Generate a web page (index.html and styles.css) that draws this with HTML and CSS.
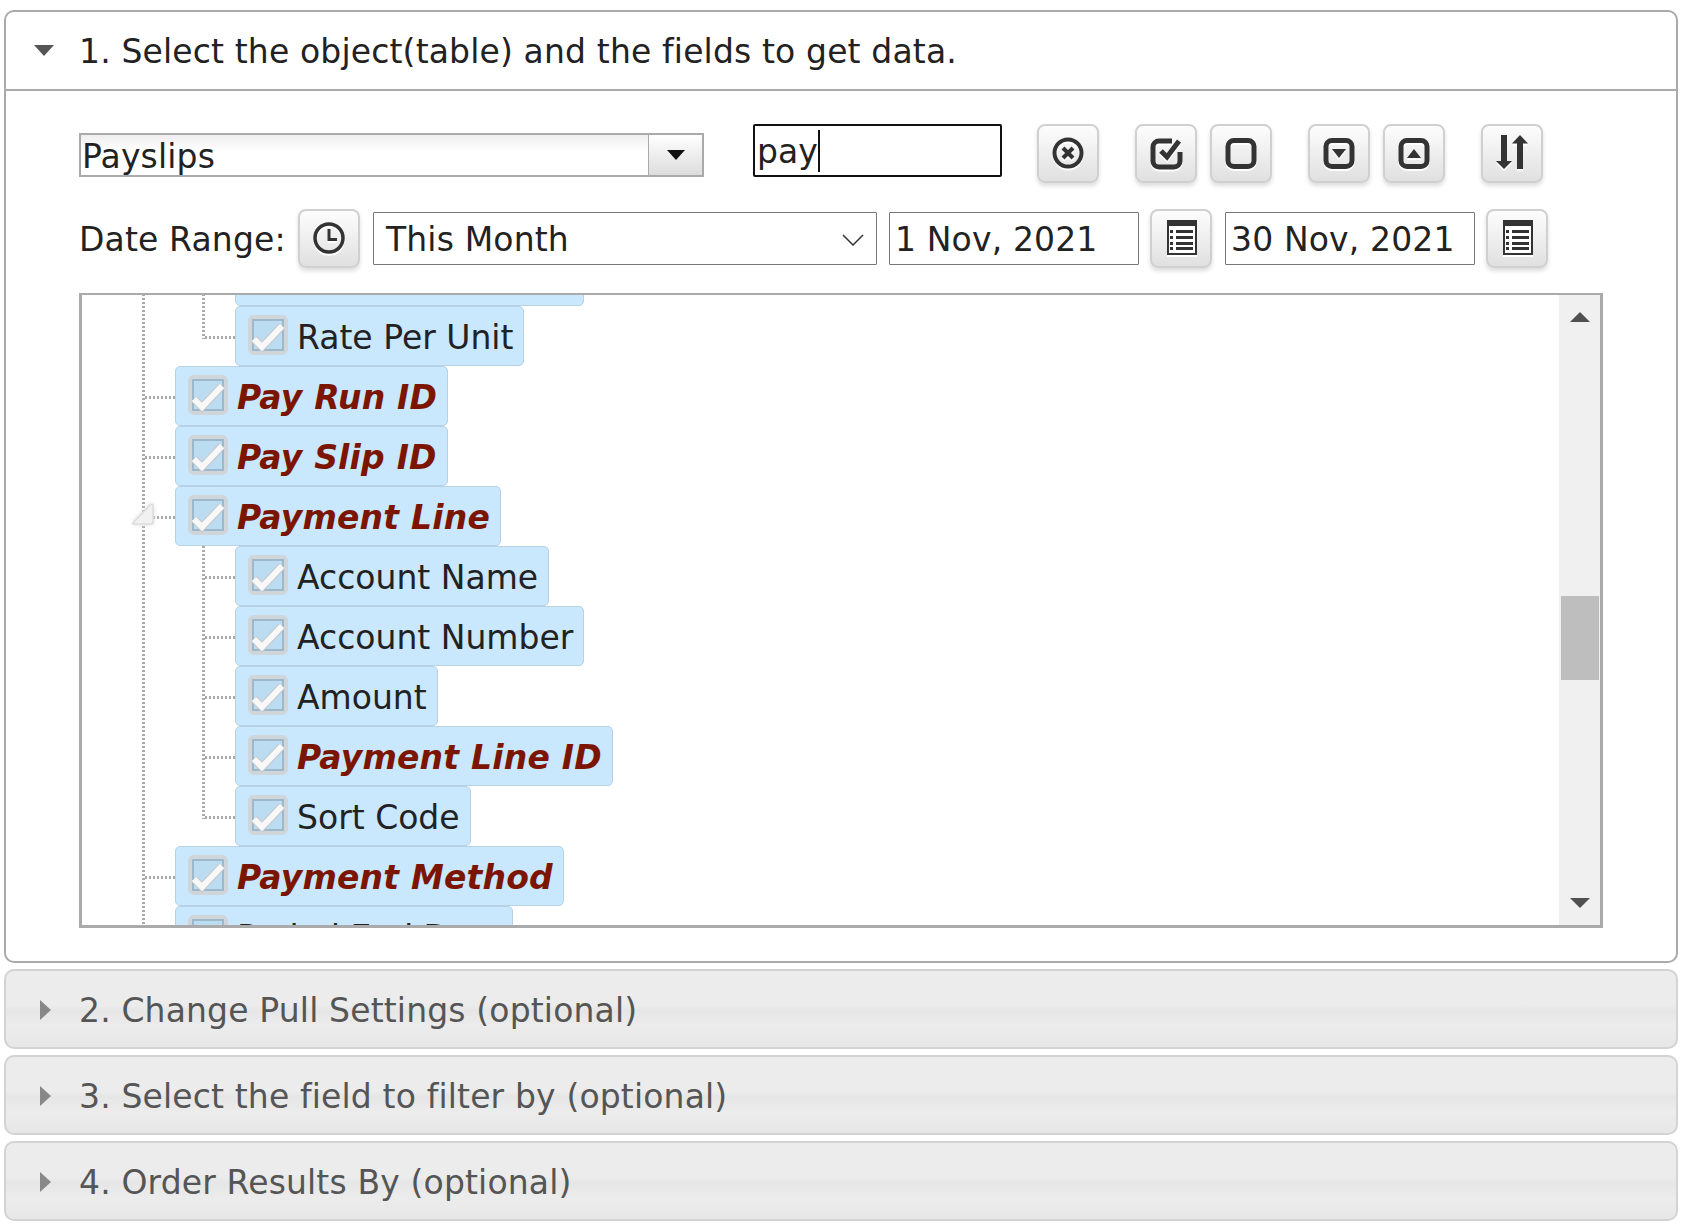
FILE: index.html
```html
<!DOCTYPE html>
<html lang="en">
<head>
    <meta charset="UTF-8">
    <meta name="viewport" content="width=device-width, initial-scale=1.0">
    <title>Select the object and the fields</title>
    <link rel="stylesheet" href="styles.css">
</head>
<body>
    <section class="panel panel-open">
        <h3 class="panel-head">
            <span class="arrow-down"></span>
            1. Select the object(table) and the fields to get data.
        </h3>
        <div class="panel-body">
            <div class="toolbar">
                <div class="combo">
                    <span class="combo-text">Payslips</span>
                    <span class="combo-btn"><span class="combo-arrow"></span></span>
                </div>
                <div class="search"><span class="caret">pay</span></div>
                <button class="btn" title="Clear">
                    <svg class="icon" viewBox="0 0 32 32"><circle cx="16" cy="16" r="13.5" fill="none" stroke="#333" stroke-width="4"/><path d="M11 11l10 10M21 11L11 21" stroke="#333" stroke-width="4" fill="none"/></svg>
                </button>
                <button class="btn btn-group" title="Select all">
                    <svg class="icon" viewBox="0 0 32 32"><path d="M22 4H9a6 6 0 0 0-6 6v14a6 6 0 0 0 6 6h15a6 6 0 0 0 6-6v-9" fill="none" stroke="#333" stroke-width="5"/><path d="M11 14l6 6L29 4" fill="none" stroke="#333" stroke-width="5"/></svg>
                </button>
                <button class="btn" title="Select none">
                    <svg class="icon" viewBox="0 0 32 32"><rect x="3" y="3.500" width="26" height="26" rx="6" fill="none" stroke="#333" stroke-width="5"/></svg>
                </button>
                <button class="btn btn-group" title="Expand all">
                    <svg class="icon" viewBox="0 0 32 32"><rect x="3" y="3.500" width="26" height="26" rx="6" fill="none" stroke="#333" stroke-width="5"/><path d="M9 12h14l-7 9z" fill="#333"/></svg>
                </button>
                <button class="btn" title="Collapse all">
                    <svg class="icon" viewBox="0 0 32 32"><rect x="3" y="3.500" width="26" height="26" rx="6" fill="none" stroke="#333" stroke-width="5"/><path d="M9 21h14l-7-9z" fill="#333"/></svg>
                </button>
                <button class="btn btn-group" title="Sort">
                    <svg class="icon icon-sort" viewBox="0 0 32 35"><path d="M5 0h6v26h5l-8 8-8-8h5z" fill="#333"/><path d="M24 0l8 8.500h-5V34h-6V8.500h-5z" fill="#333"/></svg>
                </button>
            </div>

            <div class="date-row">
                <span class="date-label">Date Range:</span>
                <button class="btn" title="Date presets">
                    <svg class="icon" viewBox="0 0 32 32"><circle cx="16" cy="16" r="14" fill="none" stroke="#333" stroke-width="3.500"/><path d="M16 7v10.500h8" fill="none" stroke="#333" stroke-width="3"/></svg>
                </button>
                <div class="range-select">
                    <span>This Month</span>
                    <svg class="chevron" viewBox="0 0 22 12"><path d="M1 1l10 10L21 1" fill="none" stroke="#333" stroke-width="1.500"/></svg>
                </div>
                <div class="date-input">1 Nov, 2021</div>
                <button class="btn" title="Pick start date">
                    <svg class="icon icon-cal" viewBox="0 0 30 35"><path d="M0 0h30v35H0z" fill="#333"/><path d="M2 6h26v27H2z" fill="#fff"/><path d="M3 10h3v3H3zM3 16h3v3H3zM3 22h3v3H3zM3 27h3v3H3zM9 10h17v3H9zM9 16h17v3H9zM9 22h17v3H9zM9 27h17v3H9z" fill="#333"/></svg>
                </button>
                <div class="date-input">30 Nov, 2021</div>
                <button class="btn" title="Pick end date">
                    <svg class="icon icon-cal" viewBox="0 0 30 35"><path d="M0 0h30v35H0z" fill="#333"/><path d="M2 6h26v27H2z" fill="#fff"/><path d="M3 10h3v3H3zM3 16h3v3H3zM3 22h3v3H3zM3 27h3v3H3zM9 10h17v3H9zM9 16h17v3H9zM9 22h17v3H9zM9 27h17v3H9z" fill="#333"/></svg>
                </button>
            </div>

            <div class="tree-box">
                <div class="tree-view">
                    <ul class="tree">
                        <li>
                            <ul>
                                <li><span class="node node-scrolled"><svg class="check"><use href="#tick"/></svg></span></li>
                                <li><span class="node"><svg class="check"><use href="#tick"/></svg>Rate Per Unit</span></li>
                            </ul>
                        </li>
                        <li><span class="node key"><svg class="check"><use href="#tick"/></svg>Pay Run ID</span></li>
                        <li><span class="node key"><svg class="check"><use href="#tick"/></svg>Pay Slip ID</span></li>
                        <li>
                            <svg class="expander" viewBox="0 0 24 24"><path d="M2 21L19 3q3-2 3 1v16q0 2-2 2H3q-2 0-1-1z" fill="#f1f1f1" stroke="#ddd" stroke-width="1.500"/></svg>
                            <span class="node key"><svg class="check"><use href="#tick"/></svg>Payment Line</span>
                            <ul>
                                <li><span class="node"><svg class="check"><use href="#tick"/></svg>Account Name</span></li>
                                <li><span class="node"><svg class="check"><use href="#tick"/></svg>Account Number</span></li>
                                <li><span class="node"><svg class="check"><use href="#tick"/></svg>Amount</span></li>
                                <li><span class="node key"><svg class="check"><use href="#tick"/></svg>Payment Line ID</span></li>
                                <li><span class="node"><svg class="check"><use href="#tick"/></svg>Sort Code</span></li>
                            </ul>
                        </li>
                        <li><span class="node key"><svg class="check"><use href="#tick"/></svg>Payment Method</span></li>
                        <li><span class="node"><svg class="check"><use href="#tick"/></svg>Period End Date</span></li>
                    </ul>
                </div>
                <div class="scrollbar">
                    <span class="scroll-up"></span>
                    <span class="scroll-thumb"></span>
                    <span class="scroll-down"></span>
                </div>
            </div>
        </div>
    </section>

    <section class="panel panel-closed">
        <h3 class="panel-head"><span class="arrow-right"></span>2. Change Pull Settings (optional)</h3>
    </section>
    <section class="panel panel-closed">
        <h3 class="panel-head"><span class="arrow-right"></span>3. Select the field to filter by (optional)</h3>
    </section>
    <section class="panel panel-closed">
        <h3 class="panel-head"><span class="arrow-right"></span>4. Order Results By (optional)</h3>
    </section>

    <!-- shared checkbox picture for the tree nodes -->
    <svg class="defs" width="0" height="0">
        <symbol id="tick" viewBox="0 0 40 40">
            <rect x="2" y="2" width="36" height="36" rx="4" fill="#bcdcf2" stroke="#d0d5d9" stroke-width="4"/>
            <rect x="5" y="5" width="30" height="30" fill="none" stroke="#9eb8cb" stroke-width="2"/>
            <path d="M6 24l8 8 20-21" fill="none" stroke="#c4c8cc" stroke-width="8"/>
            <path d="M6 24l8 8 20-21" fill="none" stroke="#f8f8f8" stroke-width="6"/>
        </symbol>
    </svg>
</body>
</html>
```

FILE: styles.css
```css
* {
    box-sizing: border-box;
}
body {
    font-family: "DejaVu Sans", Verdana, sans-serif;
    font-size: 33px;
    letter-spacing: .15px;
    color: #222;
    margin: 0;
    padding: 10px 4px 0;
    background-color: #fff;
}
.defs {
    position: absolute;
}

/* accordion panels */
.panel {
    border-radius: 10px;
    margin-bottom: 6px;
}
.panel-open {
    border: 2px solid #aaa;
    height: 953px;
}
.panel-closed {
    border: 2px solid #d3d3d3;
    height: 80px;
    color: #555;
    background: linear-gradient(#ececec 0, #ececec 45%, #e6e6e6 52%, #ececec 72%, #e7e7e7 100%);
}
.panel-head {
    display: flex;
    align-items: center;
    font-size: 33px;
    font-weight: normal;
    margin: 0;
    padding: 2px 0 0 73px;
    height: 76px;
    position: relative;
}
.panel-open .panel-head {
    height: 79px;
    border-bottom: 2px solid #aaa;
}
.arrow-down {
    position: absolute;
    left: 28px;
    top: 33px;
    border-left: 10px solid transparent;
    border-right: 10px solid transparent;
    border-top: 11px solid #555;
}
.arrow-right {
    position: absolute;
    left: 34px;
    top: 29px;
    border-top: 10px solid transparent;
    border-bottom: 10px solid transparent;
    border-left: 11px solid #888;
}
.panel-body {
    padding: 33px 0 0 73px;
}

/* top row */
.toolbar {
    display: flex;
    align-items: flex-start;
    height: 85px;
}
.toolbar .btn {
    margin-right: 13px;
}
.combo {
    display: flex;
    width: 625px;
    height: 44px;
    margin: 9px 49px 0 0;
    border: 2px solid #aaa;
    background: linear-gradient(#eee, #fff 40%);
}
.combo-text {
    flex: 1;
    padding: 1px 0 0 1px;
    line-height: 42px;
}
.combo-btn {
    width: 54px;
    display: flex;
    align-items: center;
    justify-content: center;
    border-left: 1px solid #aaa;
    background: linear-gradient(#fff, #ddd);
}
.combo-arrow {
    border-left: 9px solid transparent;
    border-right: 9px solid transparent;
    border-top: 10px solid #111;
}
.search {
    display: flex;
    align-items: center;
    width: 249px;
    height: 53px;
    margin-right: 35px;
    padding-left: 2px;
    border: 2px solid #111;
    border-radius: 2px;
    letter-spacing: 0;
}
.caret {
    line-height: 40px;
    padding-top: 2px;
    border-right: 2px solid #111;
}
.btn {
    display: flex;
    align-items: center;
    justify-content: center;
    flex: none;
    width: 62px;
    height: 59px;
    padding: 0 0 2px;
    margin-right: 14px;
    border: 2px solid #d0d0d0;
    border-radius: 8px;
    background: linear-gradient(#fdfdfd, #e0e0e0);
    box-shadow: 0 3px 4px #ddd;
}
.btn-group {
    margin-left: 23px;
}
.icon {
    width: 32px;
    height: 32px;
    overflow: visible;
    filter: drop-shadow(0 2px 0 #fff);
}
.icon-cal {
    width: 30px;
    height: 35px;
    margin-left: 2px;
}
.icon-sort {
    height: 35px;
}

/* date row */
.date-row {
    display: flex;
    align-items: center;
    height: 59px;
}
.date-label {
    width: 219px;
    padding-top: 2px;
    white-space: nowrap;
}
.date-row .btn {
    margin-right: 13px;
}
.range-select,
.date-input {
    display: flex;
    align-items: center;
    height: 53px;
    padding-top: 2px;
    margin-right: 11px;
    border: 1px solid #777;
    border-radius: 1px;
}
.range-select {
    width: 504px;
    padding: 2px 12px 0;
    margin-right: 12px;
    justify-content: space-between;
}
.date-input {
    width: 250px;
    padding-left: 5px;
}
.chevron {
    width: 22px;
    height: 12px;
}

/* field tree */
.tree-box {
    display: flex;
    width: 1524px;
    height: 635px;
    margin-top: 25px;
    border: 3px solid #aaa;
    border-width: 2px 3px 3px;
}
.tree-view {
    flex: 1;
    overflow: hidden;
}
.tree,
.tree ul {
    list-style: none;
    margin: 0;
    padding: 0;
}
.tree {
    margin-top: -49px;
    padding-left: 93px;
}
.tree ul {
    padding-left: 60px;
}
.tree li {
    position: relative;
}
/* dotted connector lines */
.tree li::before {
    content: "";
    position: absolute;
    left: -33px;
    top: 0;
    bottom: 0;
    width: 3px;
    background: repeating-linear-gradient(to bottom, #aaa 0, #aaa 2px, transparent 2px, transparent 4px);
}
.tree li::after {
    content: "";
    position: absolute;
    left: -30px;
    top: 30px;
    width: 30px;
    height: 3px;
    background: repeating-linear-gradient(to right, #aaa 0, #aaa 2px, transparent 2px, transparent 4px);
}
.tree > li:first-child::after {
    display: none;
}
.tree ul li:last-child::before {
    bottom: auto;
    height: 33px;
}
.node {
    display: inline-flex;
    align-items: center;
    vertical-align: top;
    height: 60px;
    padding: 2px 10px 0 12px;
    background-color: #c9e7fd;
    border: 1px solid #b7d2e4;
    border-radius: 5px;
    letter-spacing: 0;
}
.node-scrolled {
    width: 349px;
}
.key {
    color: #7c1500;
    font-weight: bold;
    font-style: italic;
    letter-spacing: .2px;
}
.check {
    width: 40px;
    height: 40px;
    margin: -5px 9px 0 0;
    flex: none;
}
.expander {
    position: absolute;
    left: -44px;
    top: 16px;
    width: 24px;
    height: 24px;
    z-index: 1;
    filter: drop-shadow(0 0 2px #ddd);
}

/* drawn scrollbar */
.scrollbar {
    width: 41px;
    padding-left: 2px;
    position: relative;
    background-color: #f0f0f0;
}
.scroll-up,
.scroll-down {
    position: absolute;
    left: 11px;
    border-left: 10px solid transparent;
    border-right: 10px solid transparent;
}
.scroll-up {
    top: 17px;
    border-bottom: 10px solid #505050;
}
.scroll-down {
    bottom: 17px;
    border-top: 10px solid #505050;
}
.scroll-thumb {
    display: block;
    width: 38px;
    height: 84px;
    margin-top: 301px;
    background-color: #bebebe;
}
```
